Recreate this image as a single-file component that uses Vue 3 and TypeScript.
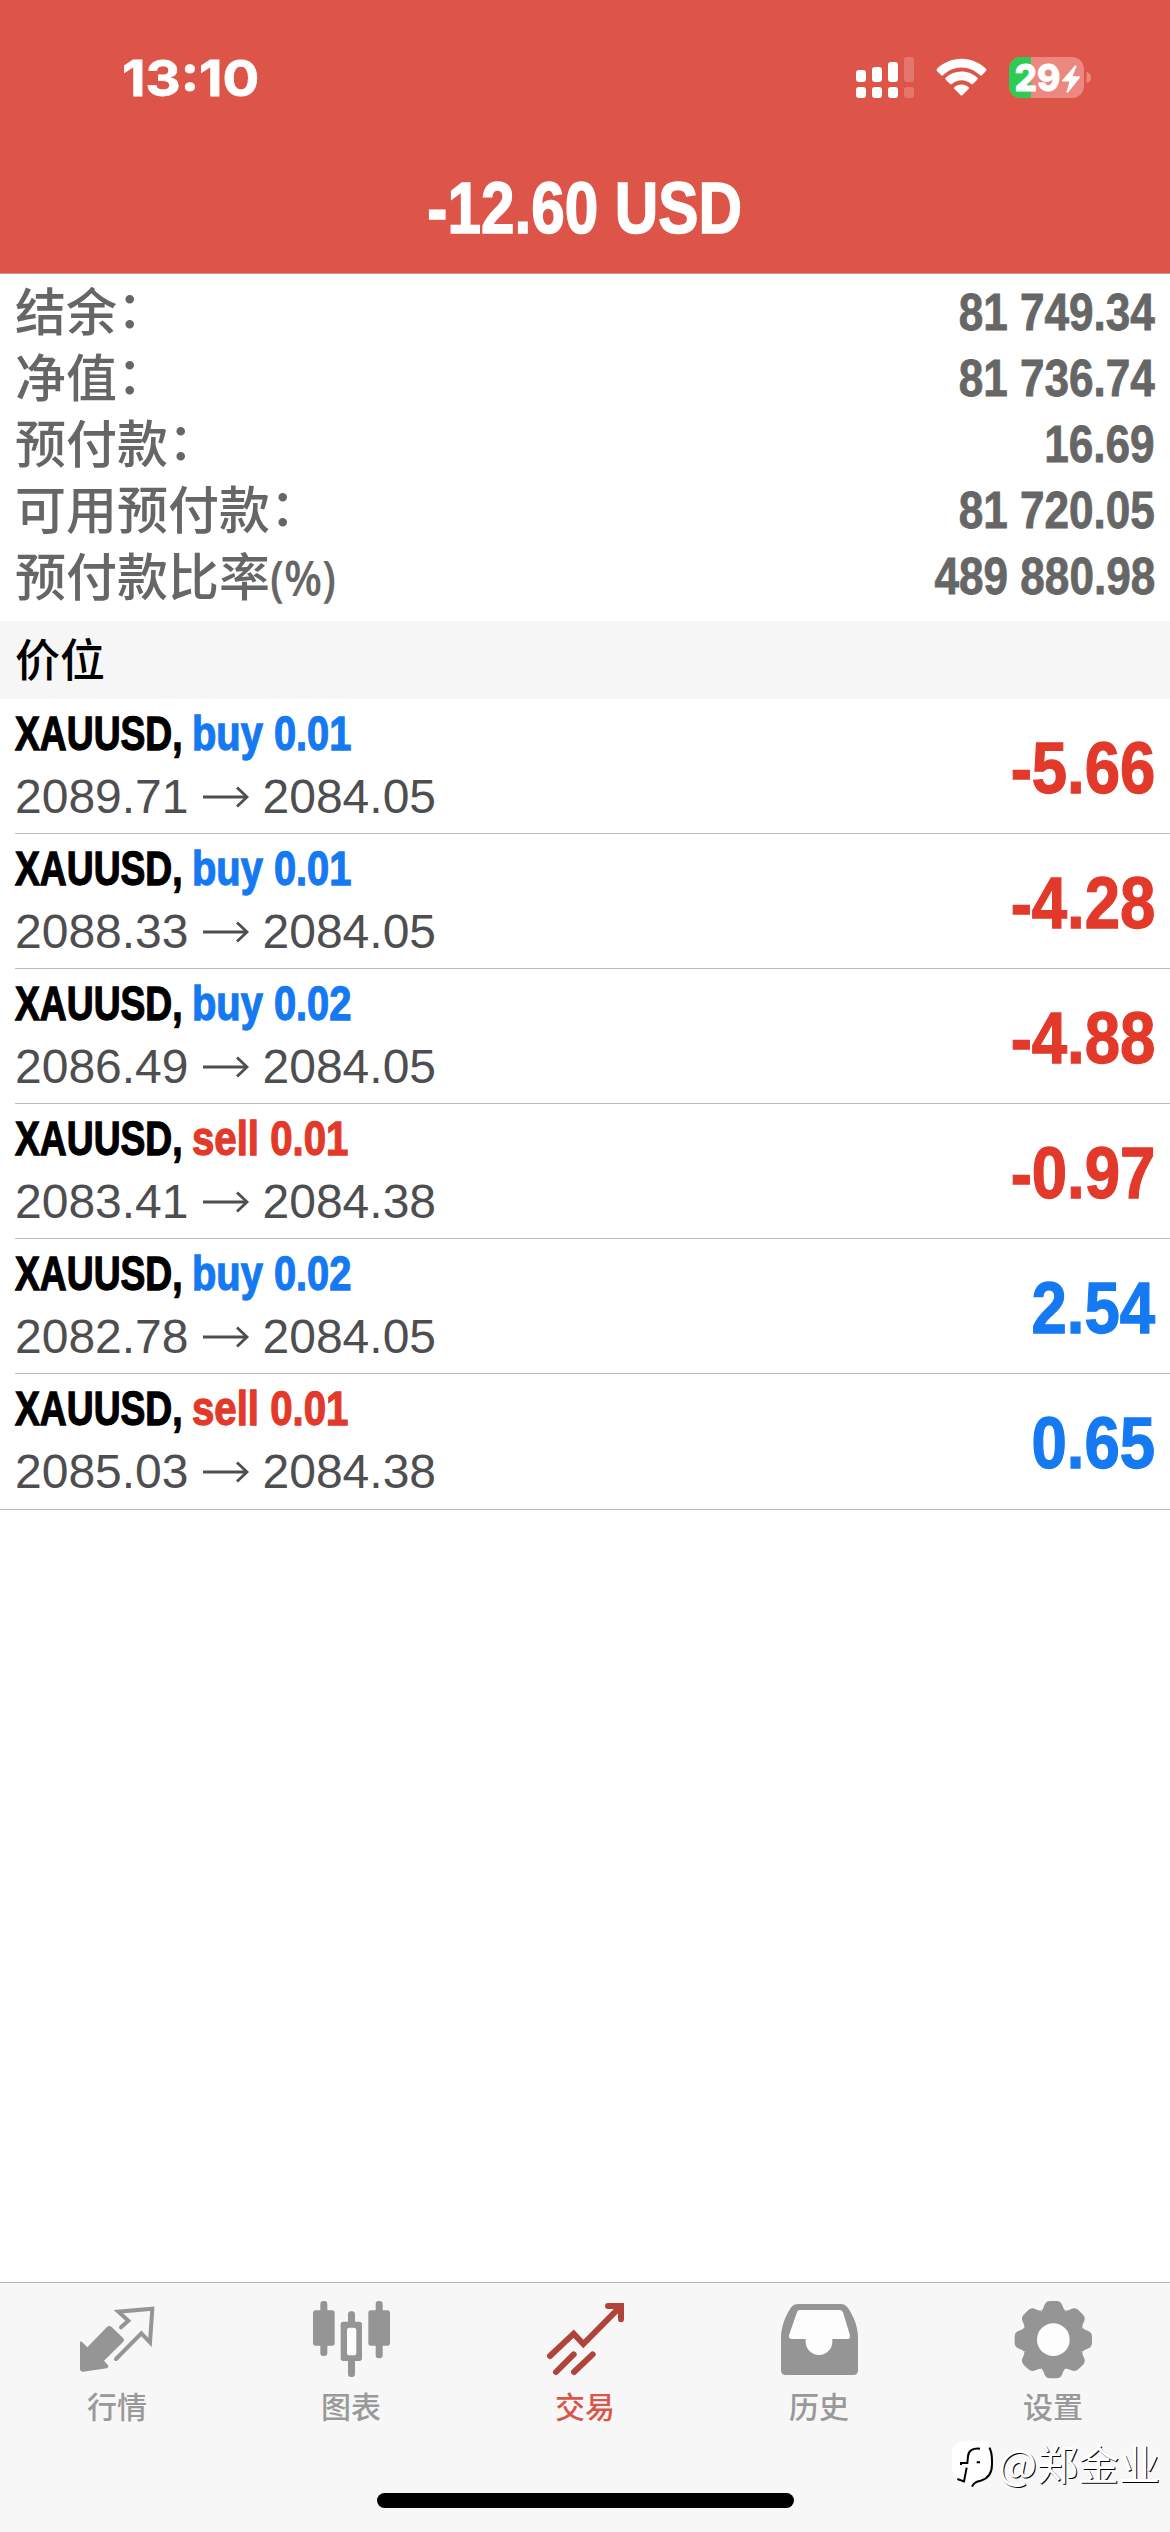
<script setup lang="ts">
interface SummaryLine {
  label: string
  suffix: string
  value: string
}

interface Position {
  side: 'buy' | 'sell'
  volume: string
  open: string
  current: string
  profit: string
}

const summary: SummaryLine[] = [
  { label: '结余', suffix: '：', value: '81 749.34' },
  { label: '净值', suffix: '：', value: '81 736.74' },
  { label: '预付款', suffix: '：', value: '16.69' },
  { label: '可用预付款', suffix: '：', value: '81 720.05' },
  { label: '预付款比率', suffix: '(%)', value: '489 880.98' },
]

const positions: Position[] = [
  { side: 'buy', volume: '0.01', open: '2089.71', current: '2084.05', profit: '-5.66' },
  { side: 'buy', volume: '0.01', open: '2088.33', current: '2084.05', profit: '-4.28' },
  { side: 'buy', volume: '0.02', open: '2086.49', current: '2084.05', profit: '-4.88' },
  { side: 'sell', volume: '0.01', open: '2083.41', current: '2084.38', profit: '-0.97' },
  { side: 'buy', volume: '0.02', open: '2082.78', current: '2084.05', profit: '2.54' },
  { side: 'sell', volume: '0.01', open: '2085.03', current: '2084.38', profit: '0.65' },
]

const gearAngles = [0, 45, 90, 135, 180, 225, 270, 315]
</script>

<template>
  <div class="screen">
    <header class="header">
      <div class="status">
        <span class="clock">13:10</span>
        <svg class="status-icons" width="240" height="44" viewBox="852 56 240 44">
          <g fill="#fff">
            <rect x="856" y="70" width="10" height="12" rx="3" />
            <rect x="872" y="67" width="10" height="15" rx="3" />
            <rect x="888" y="62" width="10" height="20" rx="3" />
            <rect x="856" y="87" width="10" height="11" rx="3" />
            <rect x="872" y="87" width="10" height="11" rx="3" />
            <rect x="888" y="87" width="10" height="11" rx="3" />
            <g opacity=".2">
              <rect x="904" y="57" width="10" height="25" rx="3" />
              <rect x="904" y="87" width="10" height="11" rx="3" />
            </g>
            <path d="M961.5 58.7C952 58.7 943.500 62.500 937 68.800Q936 70 937 71L941 75Q942 76 943.200 75C948.200 70.200 954.500 67.400 961.500 67.400S974.800 70.200 979.800 75Q981 76 982 75L986 71Q987 70 986 68.800C979.500 62.500 971 58.700 961.500 58.700Z" />
            <path d="M961.5 71.500C955.500 71.500 950 73.800 945.800 77.600Q944.700 78.700 945.800 79.800L949.800 83.700Q951 84.700 952.200 83.700C954.700 81.500 958 80.200 961.500 80.200S968.300 81.500 970.800 83.700Q972 84.700 973.200 83.700L977.200 79.800Q978.300 78.700 977.200 77.600C973 73.800 967.500 71.500 961.500 71.500Z" />
            <path d="M961.500 84.500C958.800 84.500 956.400 85.400 954.500 86.900Q953.500 87.900 954.500 88.900L960.500 95Q961.500 96 962.500 95L968.500 88.900Q969.500 87.900 968.500 86.900C966.600 85.400 964.200 84.500 961.500 84.500Z" />
          </g>
          <clipPath id="battery"><rect x="1009" y="57" width="75" height="41" rx="12" /></clipPath>
          <g clip-path="url(#battery)">
            <rect x="1009" y="57" width="75" height="41" fill="#ec8880" />
            <rect x="1009" y="57" width="22" height="41" fill="#2ecb53" />
          </g>
          <path d="M1086.500 72Q1091 73 1091 77.500T1086.500 83Z" fill="#ec8880" />
          <text x="1014.500" y="91" class="battery-text" textLength="46" lengthAdjust="spacingAndGlyphs">29</text>
          <path d="M1075 65.500L1062 80.500Q1061.500 81.500 1063 81.500H1069.500L1066.500 92Q1067 93.500 1068.500 92L1080 77.500Q1080.500 76.300 1079 76.300H1072.500L1076.500 66.500Q1076.500 65 1075 65.500Z" fill="#fff" />
        </svg>
      </div>
      <h1 class="title"><span>-12.60 USD</span></h1>
    </header>

    <section class="summary">
      <div v-for="line in summary" :key="line.label" class="summary-line">
        <span class="label">{{ line.label }}<span :class="line.suffix === '：' ? 'colon' : 'percent'">{{ line.suffix }}</span></span>
        <span class="value">{{ line.value }}</span>
      </div>
    </section>

    <h2 class="section">价位</h2>

    <ul class="positions">
      <li v-for="(p, i) in positions" :key="i" class="position">
        <div class="details">
          <div class="name">
            <span class="symbol">XAUUSD,</span>
            <span :class="['side', p.side]">{{ p.side }} {{ p.volume }}</span>
          </div>
          <div class="prices">
            <span>{{ p.open }}</span>
            <svg class="arrow" width="48" height="24" viewBox="0 0 48 24" fill="none" stroke="#4e4e50">
              <path d="M1 12H45" stroke-width="2.800" />
              <path d="M35 2.500L45 12L35 21.500" stroke-width="2.800" />
            </svg>
            <span>{{ p.current }}</span>
          </div>
        </div>
        <span :class="['profit', p.profit.startsWith('-') ? 'sell' : 'buy']">{{ p.profit }}</span>
      </li>
    </ul>

    <nav class="tabs">
      <div class="tab">
        <svg class="icon" viewBox="0 0 234 234">
          <path fill="#959595" d="M6 122Q11 121 15 126L28 139L86 79Q93 71 101 78L136 112Q141 117 136 122L78 179L90 193Q93 200 86 202L16 212Q6 212 6 204Z" />
          <path fill="none" stroke="#959595" stroke-width="12" stroke-linecap="round" d="M129 79L151 59L121 32L223 23L216 124L190 97L114 174" />
        </svg>
        <span>行情</span>
      </div>
      <div class="tab">
        <svg class="icon" viewBox="0 0 234 234" fill="#959595">
          <rect x="25" y="0" width="21" height="165" rx="9" />
          <rect x="3" y="28" width="65" height="106" rx="8" />
          <rect x="108" y="31" width="21" height="197" rx="9" />
          <rect x="86" y="62" width="64" height="118" rx="8" />
          <rect x="105" y="80" width="28" height="83" rx="8" fill="#fdfdfd" />
          <rect x="191" y="0" width="21" height="172" rx="9" />
          <rect x="169" y="28" width="65" height="106" rx="8" />
        </svg>
        <span>图表</span>
      </div>
      <div class="tab active">
        <svg class="icon" viewBox="0 0 234 234" fill="none" stroke="#b0443a" stroke-width="18" stroke-linecap="round">
          <path d="M12 165L83 98L112 129L223 17" />
          <path d="M186 15H225V55" />
          <path d="M30 213L83 160M84 213L140 160" />
        </svg>
        <span>交易</span>
      </div>
      <div class="tab">
        <svg class="icon" viewBox="0 0 234 234">
          <path fill="#959595" d="M3 208V108C4 72 18 43 32 21Q40 9 54 9H182Q196 9 204 21C219 43 233 72 234 108V208Q234 222 220 222H17Q3 222 3 208Z" />
          <path fill="#fdfdfd" d="M59 27H178Q186 27 189 34L209 100Q213 114 203 114H157V122A40 40 0 0 1 77 122V114H35Q24 114 28 100L51 34Q53 27 59 27Z" />
        </svg>
        <span>历史</span>
      </div>
      <div class="tab">
        <svg class="icon" viewBox="0 0 234 234">
          <g transform="translate(118 116)" fill="#959595">
            <circle r="90" />
            <path
              v-for="a in gearAngles"
              :key="a"
              :transform="`rotate(${a})`"
              d="M0 0L-36 -88Q-31 -90 -27 -103Q-22 -116 -10 -116H10Q22 -116 27 -103Q31 -90 36 -88Z"
            />
            <circle r="49" fill="#fdfdfd" />
          </g>
        </svg>
        <span>设置</span>
      </div>
      <div class="home-indicator"></div>
      <div class="watermark">
        <svg width="46" height="50" viewBox="0 0 138 150">
          <path d="M45 13H95Q120 15 120 50V88Q120 122 88 126L57 146L50 132Q0 128 0 88V50Q0 13 45 13Z" fill="#fff" />
          <path d="M84 35Q50 32 48 58L46 78H27V84M44 92L36 133L16 126M74 76H84" fill="none" stroke="#000" stroke-width="6" />
          <path d="M112 32Q121 45 120 82Q120 122 86 131Q66 134 60 149" fill="none" stroke="#000" stroke-width="6" />
        </svg>
        <span>@郑金业</span>
      </div>
    </nav>
  </div>
</template>

<style>
body {
  margin: 0;
  background: #fff;
}
</style>

<style scoped>
.screen {
  width: 1170px;
  height: 2532px;
  display: flex;
  flex-direction: column;
  overflow: hidden;
  background: #fff;
  font-family: "Liberation Sans", "Noto Sans CJK SC", sans-serif;
}

.header {
  height: 273px;
  background: #dd5548;
  border-bottom: 1px solid #c79a94;
  color: #fff;
}

.status {
  height: 155px;
  box-sizing: border-box;
  padding: 0 78px 0 122px;
  display: flex;
  align-items: center;
  justify-content: space-between;
}

.clock {
  font: 700 50px/60px Inter, sans-serif;
  white-space: nowrap;
  -webkit-text-stroke: 0.8px #fff;
  transform: scaleX(1.09);
  transform-origin: left;
}

.battery-text {
  font: 800 37px Inter, sans-serif;
  fill: #fff;
  stroke: #fff;
  stroke-width: 0.8px;
}

.title {
  margin: 0;
  padding-top: 1px;
  font-size: 73px;
  line-height: 104px;
  font-weight: 700;
  text-align: center;
  white-space: nowrap;
  -webkit-text-stroke: 1.6px #fff;
}

.title span {
  display: inline-block;
  transform: scaleX(0.825);
}

.summary {
  padding: 5px 15px 12px;
  color: #666;
}

.summary-line {
  height: 66px;
  display: flex;
  align-items: center;
  justify-content: space-between;
}

.label {
  font: 500 51px/60px "Liberation Sans", "Noto Sans CJK SC", sans-serif;
  margin-top: 4px;
  white-space: nowrap;
}

.colon {
  position: relative;
  top: -3px;
}

.percent {
  display: inline-block;
  font: 600 49px/60px "Open Sans", sans-serif;
  transform: scaleX(0.9);
  transform-origin: left;
}

.value {
  font-size: 51px;
  line-height: 66px;
  margin-top: 2px;
  font-weight: 700;
  -webkit-text-stroke: 0.8px #666;
  transform: scaleX(0.865);
  transform-origin: right;
}

.section {
  margin: 0;
  height: 78px;
  box-sizing: border-box;
  padding-left: 15px;
  background: #f6f6f6;
  color: #000;
  font: 500 45px/74px "Noto Sans CJK SC", sans-serif;
}

.positions {
  margin: 0;
  padding: 0;
  list-style: none;
}

.position {
  box-sizing: border-box;
  height: 135px;
  margin-left: 15px;
  padding-right: 15px;
  border-bottom: 1px solid #bcbcbe;
  display: flex;
  justify-content: space-between;
}

.position:last-child {
  height: 136px;
  margin-left: 0;
  padding-left: 15px;
}

.details {
  padding-top: 2px;
}

.name,
.prices {
  display: flex;
  align-items: center;
  height: 64px;
  white-space: nowrap;
}

.name {
  font-size: 49px;
  line-height: 64px;
  font-weight: 700;
  -webkit-text-stroke: 1.3px;
}

.symbol {
  width: 177px;
  transform: scaleX(0.76);
  transform-origin: left;
  color: #000;
}

.side {
  transform: scaleX(0.813);
  transform-origin: left;
}

.side.sell {
  transform: scaleX(0.82);
}

.prices {
  font-size: 48px;
  line-height: 64px;
  color: #4e4e50;
}

.arrow {
  margin: 0 13px;
}

.profit {
  font-size: 73px;
  line-height: 138px;
  font-weight: 700;
  -webkit-text-stroke: 1.3px;
  transform: scaleX(0.87);
  transform-origin: right;
}

.buy {
  color: #1579f2;
}

.sell {
  color: #e2392b;
}

.tabs {
  position: relative;
  box-sizing: border-box;
  height: 250px;
  margin-top: auto;
  padding-top: 18px;
  border-top: 1px solid #b1b1b1;
  background: #f7f7f7;
  display: flex;
}

.tab {
  width: 234px;
  display: flex;
  flex-direction: column;
  align-items: center;
  color: #999;
  font: 500 30px/44px "Noto Sans CJK SC", sans-serif;
}

.tab.active {
  color: #d9564b;
}

.icon {
  width: 78px;
  height: 78px;
  margin-bottom: 4px;
}

.home-indicator {
  position: absolute;
  left: 377px;
  bottom: 24px;
  width: 417px;
  height: 15px;
  border-radius: 8px;
  background: #000;
}

.watermark {
  position: absolute;
  right: 10px;
  bottom: 43px;
  display: flex;
  align-items: center;
  height: 54px;
  color: #fff;
  font: 400 41px/54px "Noto Sans CJK SC", sans-serif;
  text-shadow: 1px 1px 0 #000;
}
</style>
